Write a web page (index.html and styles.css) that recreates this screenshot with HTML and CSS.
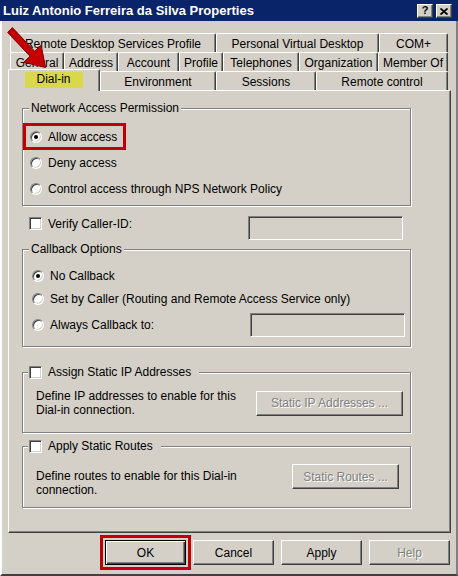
FILE: index.html
```html
<!DOCTYPE html>
<html>
<head>
<meta charset="utf-8">
<link rel="stylesheet" href="styles.css">
</head>
<body>
<div class="window">
  <div class="titlebar">
    <span class="title">Luiz Antonio Ferreira da Silva Properties</span>
    <div class="caption-btns">
      <span class="cbtn help-c">?</span>
      <span class="cbtn close-c"><svg width="8" height="7" viewBox="0 0 8 7"><path d="M0.5 0.5 L7.5 6.5 M7.5 0.5 L0.5 6.5" stroke="#000" stroke-width="1.8" fill="none"/></svg></span>
    </div>
  </div>
  <div class="frame">
    <div class="tabs">
      <div class="tabrow">
        <div class="tab w206">Remote Desktop Services Profile</div>
        <div class="tab w163">Personal Virtual Desktop</div>
        <div class="tab w69">COM+</div>
      </div>
      <div class="tabrow">
        <div class="tab w54">General</div>
        <div class="tab w54">Address</div>
        <div class="tab w61">Account</div>
        <div class="tab w44">Profile</div>
        <div class="tab w76">Telephones</div>
        <div class="tab w79">Organization</div>
        <div class="tab w70">Member Of</div>
      </div>
      <div class="tabrow front">
        <div class="tab selected"><span class="hl">Dial-in</span></div>
        <div class="tab w116">Environment</div>
        <div class="tab w100">Sessions</div>
        <div class="tab w132">Remote control</div>
      </div>
    </div>

    <div class="panel">
      <div class="group g1">
        <div class="legend">Network Access Permission</div>
        <div class="opt marked"><span class="radio on"></span>Allow access</div>
        <div class="opt"><span class="radio"></span>Deny access</div>
        <div class="opt"><span class="radio"></span>Control access through NPS Network Policy</div>
      </div>

      <div class="verify">
        <span class="check"></span><span class="vlabel">Verify Caller-ID:</span>
        <span class="textbox tb-verify"></span>
      </div>

      <div class="group g2">
        <div class="legend">Callback Options</div>
        <div class="opt2 o-first"><span class="radio on"></span>No Callback</div>
        <div class="opt2 o-second"><span class="radio"></span>Set by Caller (Routing and Remote Access Service only)</div>
        <div class="opt2 o-third"><span class="radio"></span>Always Callback to:<span class="textbox tb-callback"></span></div>
      </div>

      <div class="group g3">
        <div class="legend clegend"><span class="check"></span>Assign Static IP Addresses</div>
        <div class="grow g3row">
          <div class="desc">Define IP addresses to enable for this<br>Dial-in connection.</div>
          <span class="btn disabled b-ip">Static IP Addresses ...</span>
        </div>
      </div>

      <div class="group g4">
        <div class="legend clegend"><span class="check"></span>Apply Static Routes</div>
        <div class="grow g4row">
          <div class="desc d4">Define routes to enable for this Dial-in<br>connection.</div>
          <span class="btn disabled b-routes">Static Routes ...</span>
        </div>
      </div>
    </div>

    <div class="buttons">
      <span class="btn default">OK</span>
      <span class="btn">Cancel</span>
      <span class="btn">Apply</span>
      <span class="btn disabled">Help</span>
    </div>
  </div>

  <svg class="arrow" width="60" height="52" viewBox="0 0 60 52">
    <path d="M12.4 7.6 L34.6 31.2 L41.2 25.2 L45.5 47.5 L23.6 42.3 L30 36.2 L7.6 12.4 Z" fill="#c40000" stroke="#800000" stroke-width="1" stroke-linejoin="round"/>
  </svg>
</div>
</body>
</html>
```
FILE: styles.css
```css
* { box-sizing: border-box; }
html, body { margin: 0; padding: 0; }
body {
  background: #d4d0c8;
  font-family: "Liberation Sans", Arial, sans-serif;
  font-size: 12px;
  color: #000;
}
.window {
  width: 458px;
  height: 576px;
  position: relative;
  display: flex;
  flex-direction: column;
  background: #d4d0c8;
}
.titlebar {
  height: 21px;
  background: #0a246a;
  display: flex;
  align-items: center;
  padding: 0 6px 0 3px;
}
.title {
  color: #fff;
  font-weight: bold;
  font-size: 13px;
  flex: 1;
  white-space: nowrap;
}
.caption-btns {
  display: flex;
  gap: 3px;
  margin-top: 1px;
}
.cbtn {
  width: 16px;
  height: 14px;
  background: #d4d0c8;
  border: 1px solid;
  border-color: #fff #404040 #404040 #fff;
  box-shadow: inset -1px -1px 0 #808080;
  display: flex;
  align-items: center;
  justify-content: center;
  font-weight: bold;
  font-size: 11px;
  line-height: 1;
  color: #000;
}
.help-c { padding-bottom: 1px; }
.frame {
  flex: 1;
  border-left: 2px solid #fff;
  border-right: 2px solid #808080;
  border-bottom: 2px solid #404040;
  padding-top: 12px;
  display: flex;
  flex-direction: column;
}
.tabs { display: flex; flex-direction: column; }
.tabrow {
  display: flex;
  margin-left: 8px;
}
.tabrow.front {
  margin-left: 6px;
  align-items: flex-end;
  height: 19px;
  position: relative;
  z-index: 2;
}
.tab {
  height: 19px;
  border-top: 1px solid #fff;
  border-left: 1px solid #fff;
  border-right: 1px solid #404040;
  box-shadow: inset -1px 0 0 #808080;
  border-radius: 2px 2px 0 0;
  display: flex;
  align-items: center;
  justify-content: center;
  white-space: nowrap;
  padding-top: 1px;
}
.w206 { width: 206px; }
.w163 { width: 163px; }
.w69 { width: 69px; }
.w54 { width: 54px; }
.w61 { width: 61px; }
.w44 { width: 44px; }
.w76 { width: 76px; }
.w79 { width: 79px; }
.w70 { width: 70px; }
.w116 { width: 116px; }
.w100 { width: 100px; }
.w132 { width: 132px; }
.tab.selected {
  width: 92px;
  height: 22px;
  margin-bottom: -1px;
  background: #d4d0c8;
  align-items: flex-start;
  padding-top: 2px;
}
.hl {
  background: #d8d84a;
  padding: 1px 12px 2px 11px;
  line-height: 13px;
}

.panel {
  margin-left: 6px;
  width: 443px;
  height: 443px;
  border-top: 1px solid #fff;
  border-left: 1px solid #fff;
  border-right: 1px solid #404040;
  border-bottom: 1px solid #404040;
  box-shadow: inset -1px -1px 0 #808080;
  padding-left: 13px;
  display: flex;
  flex-direction: column;
  align-items: flex-start;
}

.group {
  width: 389px;
  border: 1px solid #808080;
  box-shadow: 1px 1px 0 #fff, inset 1px 1px 0 #fff;
  display: flex;
  flex-direction: column;
  align-items: flex-start;
}
.legend {
  margin-top: -7px;
  height: 13px;
  line-height: 13px;
  background: #d4d0c8;
  padding: 0 2px;
  margin-left: 6px;
  white-space: nowrap;
}
.g1 { margin-top: 17px; padding: 0 0 6px 0; }
.opt {
  height: 21px;
  display: flex;
  align-items: center;
  padding-left: 4px;
  margin-left: 3px;
  margin-top: 5px;
  white-space: nowrap;
}
.opt.marked {
  margin-top: 11px;
  width: 97px;
  outline: 3px solid #c00000;
}
.radio {
  width: 12px;
  height: 12px;
  border-radius: 50%;
  background: #fff;
  border: 1px solid;
  border-color: #808080 #fff #fff #808080;
  box-shadow: inset 1px 1px 0 #404040, inset -1px -1px 0 #d4d0c8;
  margin-right: 6px;
  display: flex;
  align-items: center;
  justify-content: center;
  flex: none;
}
.radio.on::after {
  content: "";
  width: 4px;
  height: 4px;
  border-radius: 50%;
  background: #000;
}
.check {
  width: 13px;
  height: 13px;
  background: #fff;
  border: 1px solid;
  border-color: #808080 #fff #fff #808080;
  box-shadow: inset 1px 1px 0 #404040, inset -1px -1px 0 #d4d0c8;
  flex: none;
}
.verify {
  width: 389px;
  margin-top: 10px;
  display: flex;
  align-items: flex-start;
}
.verify .check { margin: 1px 6px 0 7px; }
.vlabel { line-height: 15px; margin-top: 1px; }
.textbox {
  display: block;
  height: 24px;
  background: #d4d0c8;
  border: 1px solid;
  border-color: #808080 #fff #fff #808080;
  box-shadow: inset 1px 1px 0 #404040, inset -1px -1px 0 #d4d0c8;
  flex: none;
}
.tb-verify { width: 155px; margin-left: auto; margin-right: 8px; }

.g2 { margin-top: 9px; padding: 0 0 9px 0; }
.opt2 {
  display: flex;
  align-items: center;
  padding-left: 9px;
  height: 21px;
  white-space: nowrap;
  width: 100%;
}
.o-first { margin-top: 9px; }
.o-second { margin-top: 2px; }
.o-third { margin-top: 4px; height: 24px; }
.tb-callback { width: 155px; margin-left: auto; margin-right: 5px; }

.clegend {
  display: flex;
  align-items: center;
  margin-left: 5px;
  padding: 0 8px 0 1px;
}
.clegend .check { margin-right: 6px; }
.g3 { margin-top: 25px; padding-bottom: 15px; }
.grow {
  width: 100%;
  display: flex;
  justify-content: space-between;
}
.g3row { margin-top: 10px; align-items: center; }
.desc {
  margin-left: 13px;
  line-height: 14px;
  white-space: nowrap;
}
.btn {
  height: 25px;
  width: 81px;
  display: flex;
  align-items: center;
  justify-content: center;
  border: 1px solid;
  border-color: #fff #404040 #404040 #fff;
  box-shadow: inset -1px -1px 0 #808080;
  white-space: nowrap;
  flex: none;
}
.btn.default {
  border-color: #000;
  box-shadow: inset 1px 1px 0 #fff, inset -1px -1px 0 #404040, inset -2px -2px 0 #808080;
  outline: 3px solid #c00000;
  outline-offset: 2px;
}
.btn.disabled {
  color: #808080;
  text-shadow: 1px 1px 0 #fff;
}
.b-ip { width: 147px; margin-right: 7px; }
.g4 { margin-top: 13px; padding-bottom: 10px; }
.g4row { margin-top: 11px; align-items: flex-start; }
.d4 { margin-top: 5px; }
.b-routes { width: 107px; margin-right: 11px; }

.buttons {
  margin-top: 7px;
  display: flex;
  justify-content: flex-end;
  gap: 7px;
  padding-right: 6px;
}
.arrow {
  position: absolute;
  left: 0;
  top: 20px;
  z-index: 5;
}
```
